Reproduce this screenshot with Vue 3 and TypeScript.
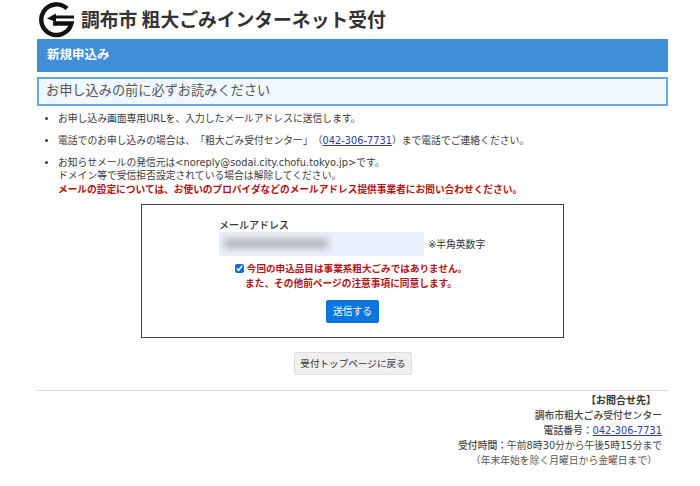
<script setup lang="ts">
const items: string[] = ['お申し込み画面専用URLを、入力したメールアドレスに送信します。']
</script>

<template>
  <div class="page">
    <header class="brand">
      <svg class="logo" viewBox="0 0 36 36" width="36" height="36" aria-hidden="true">
        <path d="M29 6.5A15.3 15.3 0 1 0 33.4 21.5H15" fill="none" stroke="#111" stroke-width="4.4" />
        <path d="M36 15H14" fill="none" stroke="#111" stroke-width="3" />
        <path d="M9 16.5 18 11.5V20Z" fill="#111" />
      </svg>
      <h1 class="site">調布市 粗大ごみインターネット受付</h1>
    </header>
    <h2 class="bar">新規申込み</h2>
    <h3 class="notice">お申し込みの前に必ずお読みください</h3>
    <ul class="list">
      <li v-for="t in items" :key="t">{{ t }}</li>
      <li>電話でのお申し込みの場合は、「粗大ごみ受付センター」（<a href="#">042-306-7731</a>）まで電話でご連絡ください。</li>
      <li>
        お知らせメールの発信元は&lt;noreply@sodai.city.chofu.tokyo.jp&gt;です。<br />
        ドメイン等で受信拒否設定されている場合は解除してください。<br />
        <strong class="warn">メールの設定については、お使いのプロバイダなどのメールアドレス提供事業者にお問い合わせください。</strong>
      </li>
    </ul>
    <form class="card" @submit.prevent>
      <div class="field">
        <label class="label">メールアドレス</label>
        <div class="input-row">
          <div class="input"><span class="blur"></span></div>
          <span class="hint">※半角英数字</span>
        </div>
      </div>
      <label class="agree">
        <input type="checkbox" checked />
        <span>今回の申込品目は事業系粗大ごみではありません。</span>
      </label>
      <p class="agree2">また、その他前ページの注意事項に同意します。</p>
      <button class="send" type="submit">送信する</button>
    </form>
    <div class="back-row"><button class="back" type="button">受付トップページに戻る</button></div>
    <footer class="foot">
      <p class="foot-title">【お問合せ先】</p>
      <p class="foot-b">調布市粗大ごみ受付センター</p>
      <p class="foot-b">電話番号：<a href="#">042-306-7731</a></p>
      <p><b class="foot-b">受付時間：</b>午前8時30分から午後5時15分まで</p>
      <p class="foot-last">（年末年始を除く月曜日から金曜日まで）</p>
    </footer>
  </div>
</template>

<style>
html, body { margin: 0; background: #fff; }
</style>

<style scoped>
.page {
  width: 700px;
  height: 486px;
  overflow: hidden;
  box-sizing: border-box;
  padding: 2px 32px 0 37px;
  font-family: "DejaVu Sans", "Noto Sans CJK JP", sans-serif;
  font-size: 9.8px;
  color: #3a3a3a;
  background: #fff;
  text-spacing-trim: space-all;
}
.brand { display: flex; align-items: center; height: 35px; gap: 7px; padding-left: 1px; }
.logo { flex: none; }
.site { margin: 0; font-size: 18.8px; font-weight: 700; color: #333; line-height: 1; font-family: "Noto Sans CJK JP", sans-serif; }
.bar {
  margin: 2px 0 0;
  height: 33px;
  line-height: 30px;
  padding-left: 10px;
  background: #3f8ed9;
  color: #fff;
  font-size: 12.5px;
  font-weight: 700;
  font-family: "Noto Sans CJK JP", sans-serif;
}
.notice {
  margin: 5px 0 0;
  height: 29px;
  box-sizing: border-box;
  border: 2px solid #68a8dc;
  background: #f0f7fd;
  padding-left: 7px;
  line-height: 22px;
  font-size: 13.2px;
  font-weight: 400;
  color: #555;
  font-family: "Noto Sans CJK JP", sans-serif;
}
.list { margin: 6px 0 0; padding: 0 0 0 21px; line-height: 13.8px; list-style: disc; }
.list li { margin-bottom: 8px; }
.list li:nth-child(3) { margin-bottom: 0; }
a { color: #2c3a9c; }
.warn { color: #b31212; font-weight: 700; font-size: 9.7px; }
.card {
  width: 423px;
  height: 134px;
  box-sizing: border-box;
  margin: 7px 0 0 104px;
  border: 1px solid #444;
  display: flex;
  flex-direction: column;
  align-items: center;
  padding-top: 13px;
}
.field { width: 267px; }
.label { display: block; font-size: 10px; font-weight: 500; line-height: 14px; color: #333; font-family: "Noto Sans CJK JP", sans-serif; }
.input-row { display: flex; align-items: center; gap: 4px; }
.input {
  width: 205px;
  height: 24px;
  box-sizing: border-box;
  background: #e9f0fb;
  border-radius: 2px;
  display: flex;
  align-items: center;
  padding-left: 5px;
  overflow: hidden;
}
.blur { width: 104px; height: 11px; background: #b9bcc2; filter: blur(3px); }
.hint { font-size: 9.8px; color: #333; }
.agree {
  margin-top: 6px;
  display: flex;
  align-items: center;
  gap: 3px;
  color: #b31212;
  font-size: 9.6px;
  font-weight: 700;
  line-height: 14px;
  padding-right: 3px;
}
.agree input { margin: 0; width: 9px; height: 9px; accent-color: #0a6fd8; }
.agree2 { margin: 1px 0 0; padding-right: 3px; color: #b31212; font-size: 9.7px; font-weight: 700; line-height: 14px; }
.send {
  margin-top: 9px;
  width: 53px;
  height: 23px;
  padding: 0;
  border: 1px solid #0a6fd8;
  border-radius: 2px;
  background: #0a76e0;
  color: #fff;
  font: inherit;
  font-size: 9.8px;
}
.back-row { display: flex; justify-content: center; margin-top: 14px; padding-left: 1px; }
.back {
  width: 118px;
  height: 23px;
  padding: 0;
  border: 1px solid #ddd;
  border-radius: 2px;
  background: #efefef;
  color: #333;
  font: inherit;
  font-size: 9.6px;
}
.foot {
  margin: 15px -1px 0 0;
  border-top: 1px solid #ddd;
  padding: 2px 7px 0 0;
  text-align: right;
  line-height: 15px;
  color: #444;
}
.foot p { margin: 0; }
.foot-title { font-size: 10px; font-weight: 700; color: #333; padding-right: 6px; }
.foot-b { font-weight: 500; color: #444; }
.foot-b a { font-weight: 400; }
.foot-last { color: #555; padding-right: 5px; }
</style>
